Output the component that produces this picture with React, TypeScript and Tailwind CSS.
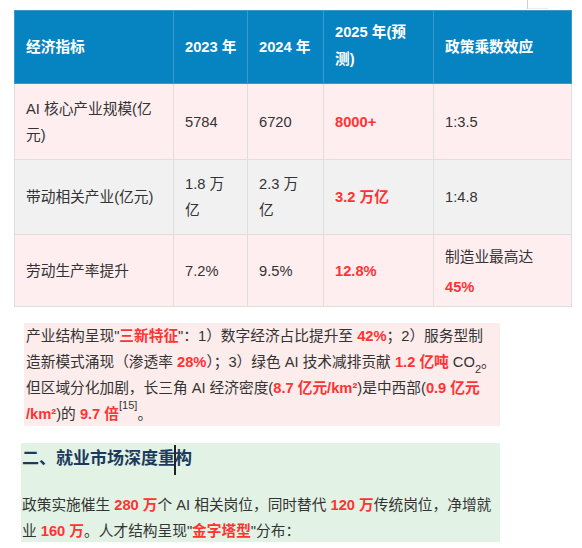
import React from "react";

const red = "text-[#ff3333] font-bold";

function R({ children }: { children: React.ReactNode }) {
  return <span className={red}>{children}</span>;
}

export default function App() {
  const font = {
    fontFamily: '"Liberation Sans", "Noto Sans CJK SC", sans-serif',
  };
  const th =
    "border border-[#3b98cb] px-[11px] text-left align-middle font-bold text-white text-[14.7px] leading-[27px] whitespace-nowrap";
  const td =
    "border border-[#dedede] px-[11px] text-left align-middle text-[14.7px] leading-[26px] text-[#333] whitespace-nowrap";
  return (
    <div className="w-[582px] h-[548px] bg-white overflow-hidden text-[#333]" style={font}>
      <div className="h-[10px] flex">
        <div className="ml-[527px] w-px h-[9px] bg-[#cfcfcf]" />
        <div className="mt-[8px] w-[20px] h-px bg-[#ececec]" />
      </div>
      <table className="ml-[14px] w-[557px] table-fixed border-collapse">
        <colgroup>
          <col className="w-[159px]" />
          <col className="w-[74px]" />
          <col className="w-[76px]" />
          <col className="w-[110px]" />
          <col className="w-[138px]" />
        </colgroup>
        <thead>
          <tr className="h-[73px] bg-[#0683c1]">
            <th className={th}>经济指标</th>
            <th className={th}>2023 年</th>
            <th className={th}>2024 年</th>
            <th className={th + " pb-[2px]"}>
              2025 年(预
              <br />
              测)
            </th>
            <th className={th}>政策乘数效应</th>
          </tr>
        </thead>
        <tbody>
          <tr className="h-[76px] bg-[#ffeef0]">
            <td className={td}>
              AI 核心产业规模(亿
              <br />
              元)
            </td>
            <td className={td}>5784</td>
            <td className={td}>6720</td>
            <td className={td}>
              <R>8000+</R>
            </td>
            <td className={td}>1:3.5</td>
          </tr>
          <tr className="h-[75px] bg-[#f1f1f1]">
            <td className={td}>带动相关产业(亿元)</td>
            <td className={td}>
              1.8 万
              <br />亿
            </td>
            <td className={td}>
              2.3 万
              <br />亿
            </td>
            <td className={td}>
              <R>3.2 万亿</R>
            </td>
            <td className={td}>1:4.8</td>
          </tr>
          <tr className="h-[72px] bg-[#ffeef0]">
            <td className={td}>劳动生产率提升</td>
            <td className={td}>7.2%</td>
            <td className={td}>9.5%</td>
            <td className={td}>
              <R>12.8%</R>
            </td>
            <td className={td + " leading-[30px] pt-[2px]"}>
              制造业最高达
              <br />
              <R>45%</R>
            </td>
          </tr>
        </tbody>
      </table>

      <div className="ml-[24px] mt-[16px] w-[476px] h-[103px] bg-[#fdecec] pl-[2px] text-[14.7px] leading-[26px] text-[#333]">
        <div className="whitespace-nowrap">
          产业结构呈现"<R>三新特征</R>"：1）数字经济占比提升至 <R>42%</R>；2）服务型制
        </div>
        <div className="whitespace-nowrap">
          造新模式涌现（渗透率 <R>28%</R>）；3）绿色 AI 技术减排贡献 <R>1.2 亿吨</R> CO
          <sub className="text-[11px] align-[-3px] leading-none">2</sub>。
        </div>
        <div className="whitespace-nowrap">
          但区域分化加剧，长三角 AI 经济密度(<R>8.7 亿元/km²</R>)是中西部(<R>0.9 亿元</R>
        </div>
        <div className="whitespace-nowrap">
          <R>/km²</R>)的 <R>9.7 倍</R>
          <sup className="text-[11px] align-[5px] leading-none">[15]</sup>。
        </div>
      </div>

      <div className="ml-[21px] mt-[17px] w-[479px] h-[99px] bg-[#e2f2e5] pl-[1px]">
        <div className="h-[32px] leading-[32px] text-[17px] font-bold text-[#1b3a5e] whitespace-nowrap">
          二、就业市场深度重
          <span className="inline-block w-[2px] h-[30px] bg-[#222] align-middle mx-[-1px]" />
          构
        </div>
        <div className="mt-[17px] text-[14.7px] leading-[26px] text-[#333]">
          <div className="whitespace-nowrap">
            政策实施催生 <R>280 万</R>个 AI 相关岗位，同时替代 <R>120 万</R>传统岗位，净增就
          </div>
          <div className="whitespace-nowrap">
            业 <R>160 万</R>。人才结构呈现"<R>金字塔型</R>"分布：
          </div>
        </div>
      </div>
    </div>
  );
}
